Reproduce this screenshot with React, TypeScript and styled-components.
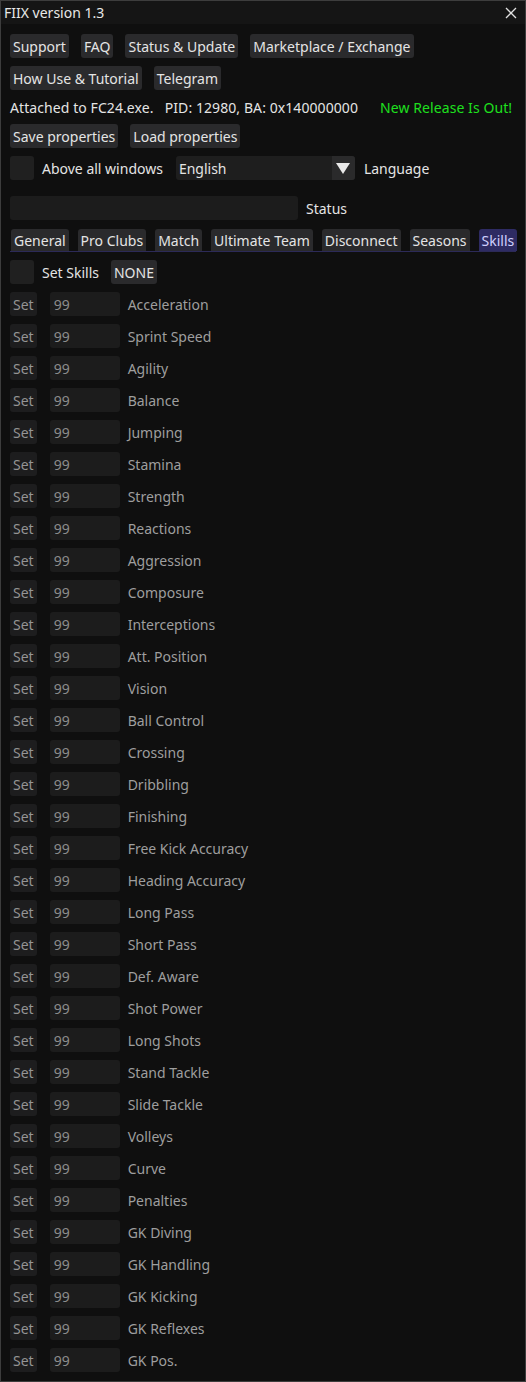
import React, { useState } from 'react'
import styled, { createGlobalStyle } from 'styled-components'

const GlobalStyle = createGlobalStyle`
  html, body {
    margin: 0;
    padding: 0;
    background: #0f0f0f;
  }
  body {
    font-family: 'Noto Sans', 'Liberation Sans', sans-serif;
    font-size: 14px;
    color: #e4e4e4;
  }
`

const skills = [
  'Acceleration',
  'Sprint Speed',
  'Agility',
  'Balance',
  'Jumping',
  'Stamina',
  'Strength',
  'Reactions',
  'Aggression',
  'Composure',
  'Interceptions',
  'Att. Position',
  'Vision',
  'Ball Control',
  'Crossing',
  'Dribbling',
  'Finishing',
  'Free Kick Accuracy',
  'Heading Accuracy',
  'Long Pass',
  'Short Pass',
  'Def. Aware',
  'Shot Power',
  'Long Shots',
  'Stand Tackle',
  'Slide Tackle',
  'Volleys',
  'Curve',
  'Penalties',
  'GK Diving',
  'GK Handling',
  'GK Kicking',
  'GK Reflexes',
  'GK Pos.',
]

const tabs = [
  'General',
  'Pro Clubs',
  'Match',
  'Ultimate Team',
  'Disconnect',
  'Seasons',
  'Skills',
]

const Window = styled.div`
  width: 526px;
  height: 1382px;
  box-sizing: border-box;
  border: 1px solid #3d3d3d;
  background: #0f0f0f;
  display: flex;
  flex-direction: column;
  overflow: hidden;
`

const TitleBar = styled.div`
  height: 23px;
  flex: none;
  background: #151515;
  display: flex;
  align-items: center;
  justify-content: space-between;
  padding: 0 8px 0 3px;
  color: #e8e8e8;
`

const CloseIcon = () => (
  <svg width="12" height="12" viewBox="0 0 12 12">
    <path d="M1 1 L11 11 M11 1 L1 11" stroke="#e0e0e0" strokeWidth="1.3" />
  </svg>
)

const Body = styled.div`
  display: flex;
  flex-direction: column;
  gap: 8px;
  padding: 10px 9px;
`

const Row = styled.div<{ $gap?: number; $top?: number }>`
  display: flex;
  align-items: center;
  height: 24px;
  gap: ${(p) => p.$gap ?? 12}px;
  margin-top: ${(p) => p.$top ?? 0}px;
`

const TextLine = styled.div`
  height: 18px;
  display: flex;
  align-items: center;
  gap: 22px;
  white-space: pre;
  letter-spacing: 0.08px;
`

const Green = styled.span`
  color: #1ee01e;
`

const Button = styled.button<{ $dim?: boolean }>`
  font: inherit;
  height: 24px;
  padding: 0 3px;
  border: none;
  border-radius: 3px;
  background: ${(p) => (p.$dim ? '#1d1d1e' : '#2a2a2c')};
  color: ${(p) => (p.$dim ? '#949494' : '#e4e4e4')};
  white-space: nowrap;
`

const Check = styled.div`
  width: 24px;
  height: 24px;
  border-radius: 3px;
  background: #202020;
  flex: none;
`

const Label = styled.span<{ $muted?: boolean }>`
  color: ${(p) => (p.$muted ? '#9e9e9e' : '#e4e4e4')};
  white-space: nowrap;
`

const Pair = styled.div<{ $gap?: number }>`
  display: flex;
  align-items: center;
  gap: ${(p) => p.$gap ?? 8}px;
`

const Combo = styled.div`
  width: 179px;
  height: 24px;
  border-radius: 3px;
  background: #1e1e1e;
  display: flex;
  align-items: center;
  overflow: hidden;
`

const ComboText = styled.span`
  flex: 1;
  padding-left: 3px;
`

const ComboArrow = styled.div`
  width: 23px;
  height: 24px;
  background: #2a2a2b;
  display: flex;
  align-items: center;
  justify-content: center;
`

const Field = styled.div<{ $width: number; $muted?: boolean }>`
  width: ${(p) => p.$width}px;
  height: 24px;
  border-radius: 3px;
  background: #1c1c1c;
  padding-left: 4px;
  box-sizing: border-box;
  display: flex;
  align-items: center;
  color: ${(p) => (p.$muted ? '#8c8c8c' : '#e4e4e4')};
`

const TabBar = styled.div`
  display: flex;
  align-items: flex-end;
  gap: 9px;
  height: 24px;
  box-sizing: border-box;
  border-bottom: 1px solid #2c2a58;
  padding-left: 1px;
`

const Tab = styled.div<{ $active?: boolean }>`
  height: 22px;
  padding: 0 3px;
  border-radius: 3px 3px 0 0;
  display: flex;
  align-items: center;
  background: ${(p) => (p.$active ? '#2e2b63' : '#2a2a2c')};
  color: ${(p) => (p.$active ? '#d0d0ff' : '#e4e4e4')};
  white-space: nowrap;
`

const SkillRow = styled(Row)`
  gap: 13px;
`

export default function App() {
  const [active] = useState('Skills')
  return (
    <>
      <GlobalStyle />
      <Window>
        <TitleBar>
          <span>FIIX version 1.3</span>
          <CloseIcon />
        </TitleBar>
        <Body>
          <Row>
            <Button>Support</Button>
            <Button>FAQ</Button>
            <Button>Status &amp; Update</Button>
            <Button>Marketplace / Exchange</Button>
          </Row>
          <Row>
            <Button>How Use &amp; Tutorial</Button>
            <Button>Telegram</Button>
          </Row>
          <TextLine>
            <span>Attached to FC24.exe.   PID: 12980, BA: 0x140000000</span>
            <Green>New Release Is Out!</Green>
          </TextLine>
          <Row>
            <Button>Save properties</Button>
            <Button>Load properties</Button>
          </Row>
          <Row $gap={13}>
            <Pair>
              <Check />
              <Label>Above all windows</Label>
            </Pair>
            <Pair $gap={9}>
              <Combo>
                <ComboText>English</ComboText>
                <ComboArrow>
                  <svg width="14" height="12" viewBox="0 0 14 12">
                    <path d="M0 1 H14 L7 12 Z" fill="#e8e8e8" />
                  </svg>
                </ComboArrow>
              </Combo>
              <Label>Language</Label>
            </Pair>
          </Row>
          <Row $top={8}>
            <Pair>
              <Field $width={288} />
              <Label>Status</Label>
            </Pair>
          </Row>
          <TabBar>
            {tabs.map((t) => (
              <Tab key={t} $active={t === active}>
                {t}
              </Tab>
            ))}
          </TabBar>
          <Row>
            <Pair>
              <Check />
              <Label>Set Skills</Label>
            </Pair>
            <Button>NONE</Button>
          </Row>
          {skills.map((s) => (
            <SkillRow key={s}>
              <Button $dim>Set</Button>
              <Pair>
                <Field $width={70} $muted>
                  99
                </Field>
                <Label $muted>{s}</Label>
              </Pair>
            </SkillRow>
          ))}
        </Body>
      </Window>
    </>
  )
}
